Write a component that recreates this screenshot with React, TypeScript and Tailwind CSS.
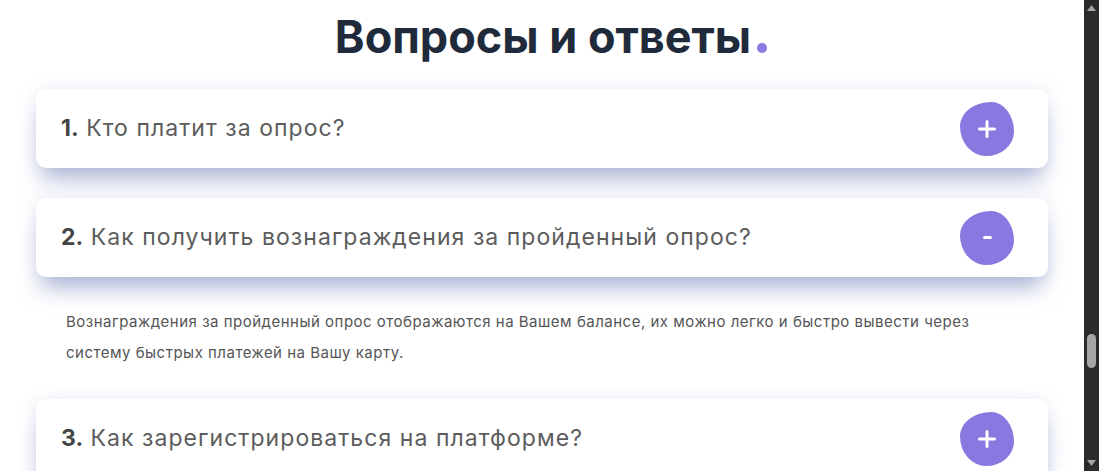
import React, { useState } from "react";

interface Faq {
  q: string;
  a: string;
}

const faqs: Faq[] = [
  {
    q: "Кто платит за опрос?",
    a: "Оплату опросов производят компании-заказчики исследований.",
  },
  {
    q: "Как получить вознаграждения за пройденный опрос?",
    a: "Вознаграждения за пройденный опрос отображаются на Вашем балансе, их можно легко и быстро вывести через систему быстрых платежей на Вашу карту.",
  },
  {
    q: "Как зарегистрироваться на платформе?",
    a: "Нажмите кнопку «Регистрация» и заполните короткую анкету.",
  },
];

const font = { fontFamily: '"Inter", "Noto Sans", sans-serif' };

const Toggle: React.FC<{ open: boolean }> = ({ open }) => (
  <div className="w-[54px] h-[54px] bg-[#8a78e0] rounded-[58%_42%_52%_48%/45%_55%_45%_55%] flex items-center justify-center shrink-0">
    {open ? (
      <span className="block w-[9px] h-[3px] bg-white rounded-sm" />
    ) : (
      <svg width="18" height="18" viewBox="0 0 18 18">
        <path d="M9 1.5v15M1.5 9h15" stroke="white" strokeWidth="3" strokeLinecap="round" />
      </svg>
    )}
  </div>
);

const App: React.FC = () => {
  const [open, setOpen] = useState<number | null>(1);

  return (
    <div className="flex h-[471px] overflow-hidden bg-white" style={font}>
      <div className="flex-1 flex flex-col">
        <h2 className="text-center text-[45px] leading-[54px] font-bold text-[#1f2a3b] pt-[10px] pl-[18px]">
          Вопросы и ответы<span className="inline-block w-[10px] h-[10px] rounded-full bg-[#8b7be0] ml-[6px] align-baseline" />
        </h2>

        <div className="mx-[36px] mt-[25px] flex flex-col">
          {faqs.map((f, i) => (
            <div key={i} className={i === 0 ? "" : open === i - 1 ? "" : "mt-[30px]"}>
              <div
                onClick={() => setOpen(open === i ? null : i)}
                className="h-[79px] bg-white rounded-[10px] flex items-center justify-between pl-[25px] pr-[34px] cursor-pointer shadow-[0_17px_22px_-6px_rgba(115,130,185,0.55),0_0_18px_rgba(150,160,205,0.2)]"
              >
                <span className="text-[23px] text-[#5c5c5c] tracking-[1.05px]">
                  <span className="font-bold text-[#444444] tracking-[0px]">{i + 1}.</span> {f.q}
                </span>
                <Toggle open={open === i} />
              </div>
              {open === i && (
                <p className="pl-[30px] pr-[48px] pt-[29px] pb-[31px] text-[15px] leading-[31px] text-[#555555] tracking-[0.5px]">
                  {f.a}
                </p>
              )}
            </div>
          ))}
        </div>
      </div>

      {/* scrollbar */}
      <div className="w-[15px] bg-[#2b2b2b] flex flex-col items-center justify-between py-[5px]">
        <svg width="9" height="6" viewBox="0 0 9 6">
          <path d="M4.5 0L9 6H0z" fill="#a3a3a3" />
        </svg>
        <div className="flex-1 flex flex-col justify-end pb-[92px]">
          <div className="w-[9px] h-[34px] rounded-[5px] bg-[#a6a6a6]" />
        </div>
        <svg width="9" height="6" viewBox="0 0 9 6">
          <path d="M0 0h9L4.5 6z" fill="#a3a3a3" />
        </svg>
      </div>
    </div>
  );
};

export default App;
